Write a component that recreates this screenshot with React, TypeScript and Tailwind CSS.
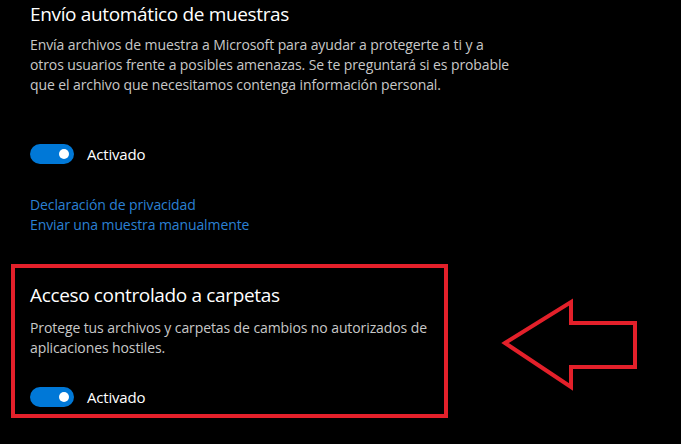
function Toggle() {
  return (
    <div className="flex items-center">
      <div className="flex h-[20px] w-[44px] items-center justify-end rounded-full bg-[#0078d7] pr-[5px]">
        <div className="h-[10px] w-[10px] rounded-full bg-white" />
      </div>
      <span className="ml-[13px] text-[15px] leading-[20px] tracking-[-0.2px] text-white">Activado</span>
    </div>
  );
}

export default function App() {
  return (
    <div className="relative h-[444px] w-[681px] overflow-hidden bg-black font-['Open_Sans',sans-serif]">
      <div className="pl-[30px]">
        <h2 className="text-[19px] leading-[28px] tracking-[-0.35px] text-white">Envío automático de muestras</h2>
        <p className="mt-[7px] text-[14px] leading-[20px] tracking-[-0.1px] text-[#c8c8c8]">
          Envía archivos de muestra a Microsoft para ayudar a protegerte a ti y a
          <br />
          otros usuarios frente a posibles amenazas. Se te preguntará si es probable
          <br />
          que el archivo que necesitamos contenga información personal.
        </p>
        <div className="mt-[49px]">
          <Toggle />
        </div>
        <div className="mt-[31px] flex flex-col items-start text-[14px] leading-[20px] tracking-[-0.1px] text-[#2b80d4]">
          <a>Declaración de privacidad</a>
          <a>Enviar una muestra manualmente</a>
        </div>
      </div>

      <div className="ml-[11px] mt-[29px] h-[154px] w-[437px] border-4 border-[#e3202a] pl-[15px] pt-[13px]">
        <h2 className="text-[19px] leading-[28px] tracking-[-0.35px] text-white">Acceso controlado a carpetas</h2>
        <p className="mt-[9px] text-[14px] leading-[20px] tracking-[-0.1px] text-[#c8c8c8]">
          Protege tus archivos y carpetas de cambios no autorizados de
          <br />
          aplicaciones hostiles.
        </p>
        <div className="mt-[29px]">
          <Toggle />
        </div>
      </div>

      <svg
        className="absolute left-[500px] top-[298px]"
        width="140"
        height="94"
        viewBox="0 0 140 94"
        fill="none"
      >
        <polygon
          points="5,45 71,4 71,25 135,25 135,69 71,69 71,89"
          stroke="#e3202a"
          strokeWidth="4"
          strokeLinejoin="miter"
        />
      </svg>
    </div>
  );
}
